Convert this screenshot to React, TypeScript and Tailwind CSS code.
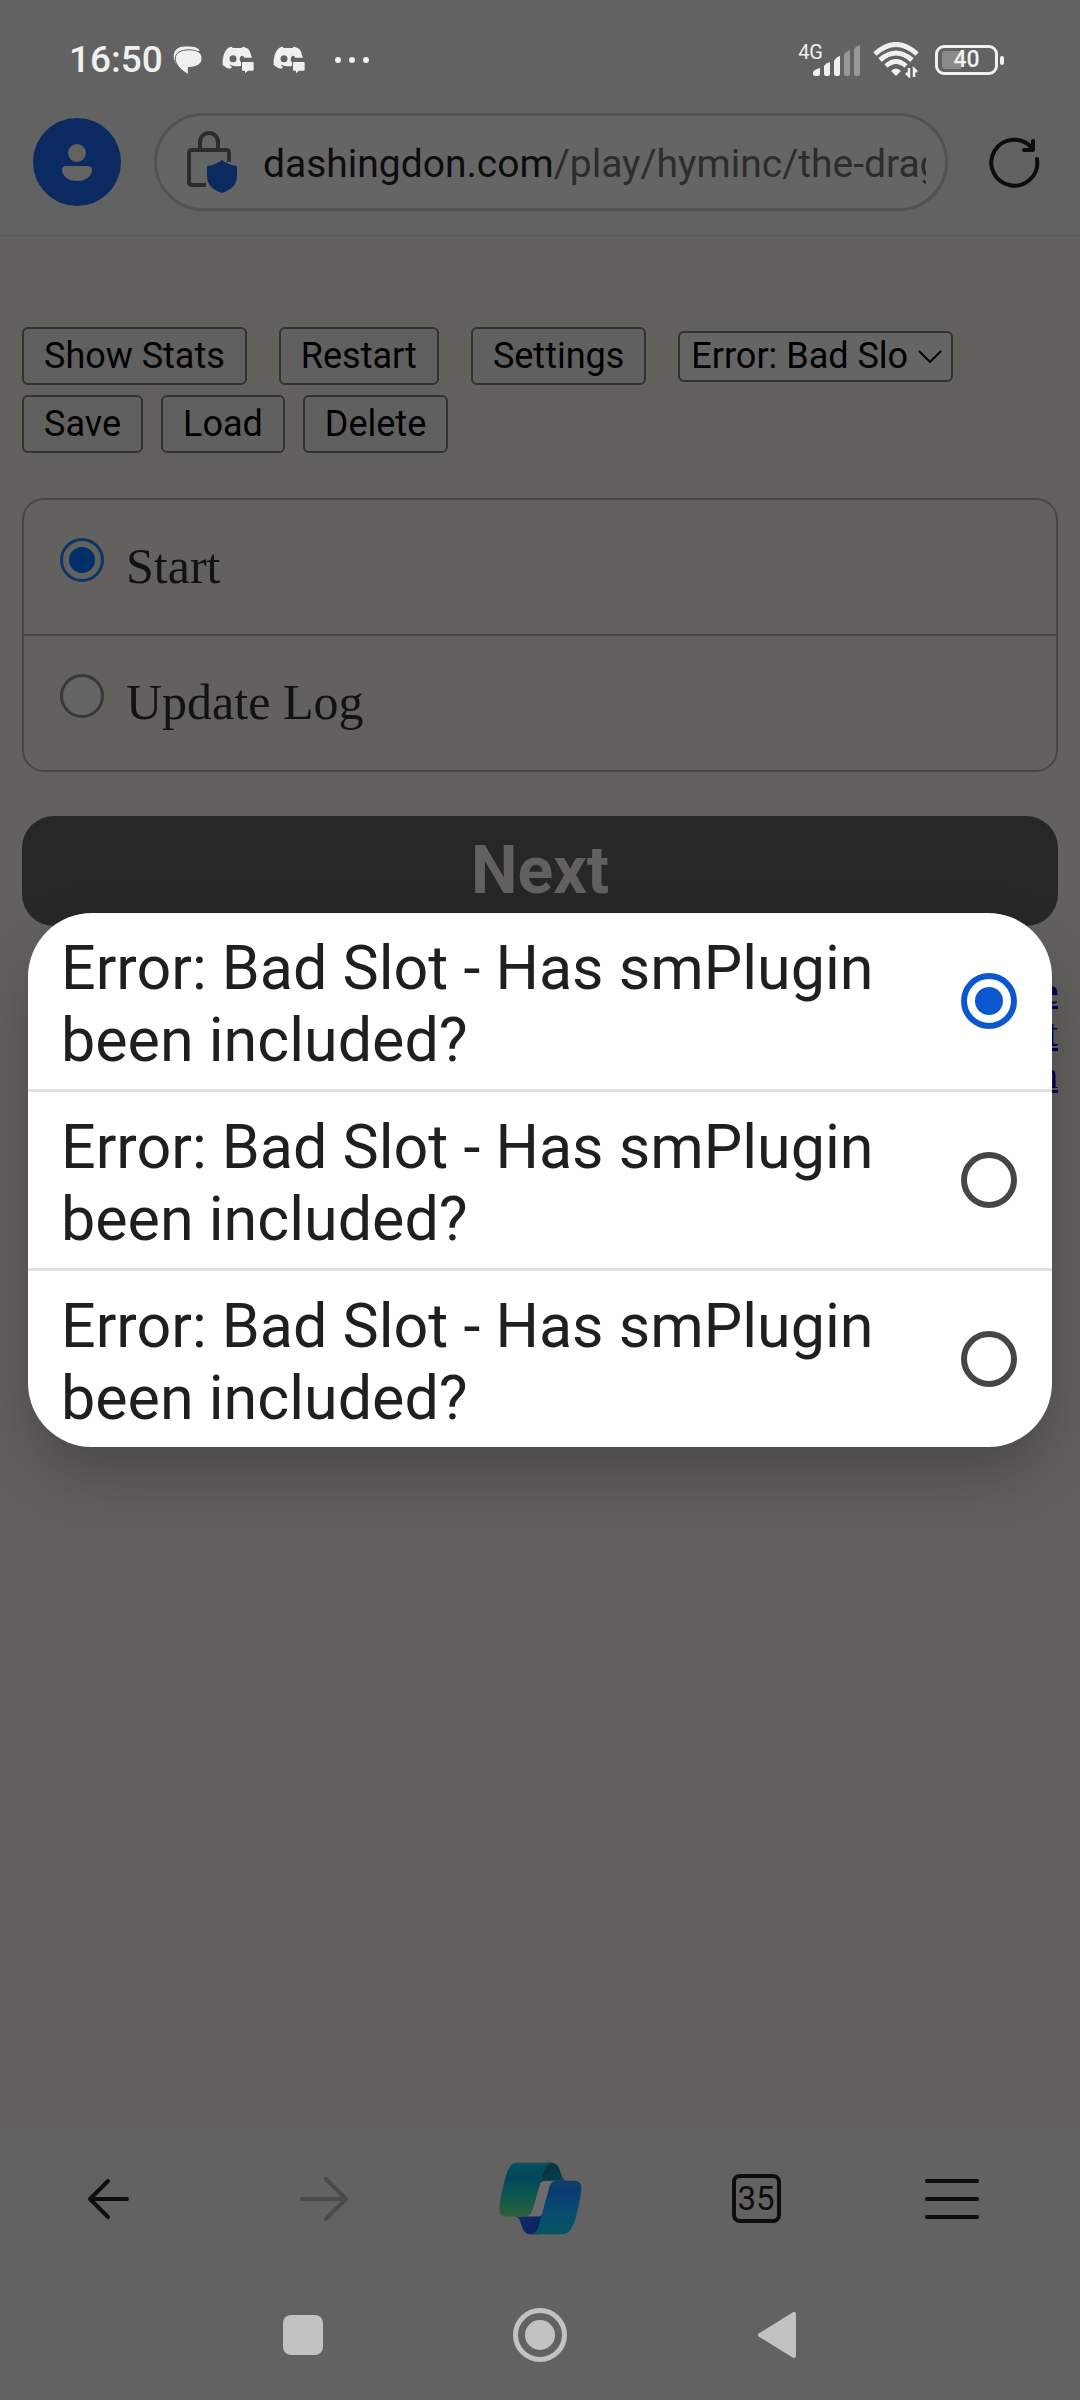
/**
 * Interactive story page on a phone, dimmed behind the native
 * drop-down dialog that lists the save slots.
 */

import { useState } from "react";

const SLOT_LABEL = "Error: Bad Slot - Has smPlugin been included?";
const SLOTS = ["slot-1", "slot-2", "slot-3"];
const CHOICES = ["Start", "Update Log"];

function ChatIcon() {
  return (
    <svg viewBox="40 32 90 86" className="h-[29px] w-[30px]" aria-hidden="true">
      <path
        d="M50 86C36 66 38 33 76 33C98 33 112 34 120 44Z"
        fill="#f0f0f0"
      />
      <path
        d="M127 69C127 88 108 96 86 96V117C70 108 47 92 47 69C47 51 64 43 88 43C112 43 127 51 127 69Z"
        fill="#f0f0f0"
        stroke="#626262"
        strokeWidth="3"
      />
    </svg>
  );
}

function DiscordIcon() {
  return (
    <svg viewBox="187 36 96 84" className="h-[28px] w-[32px]" aria-hidden="true">
      <path
        fillRule="evenodd"
        fill="#f0f0f0"
        d="M205 42L214 38Q217 38 219 42H246Q248 38 251 38L260 42Q268 44 272 56L277 71H254Q251 64 246 65Q240 67 240 75Q240 82 244 85V96Q232 98 220 95Q215 94 210 92Q211 97 217 98L213 104Q199 103 189 93Q187 58 205 42ZM220 64A10 10 0 1 0 220 85A10 10 0 1 0 220 64Z"
      />
      <path
        fill="#f0f0f0"
        d="M250 84H279Q282 84 282 88V107Q282 110 279 110H265L256 118V110H250Q247 110 247 107V88Q247 84 250 84Z"
      />
    </svg>
  );
}

function SignalIcon() {
  return (
    <svg viewBox="0 0 48 31" className="h-[31px] w-[48px]" aria-hidden="true">
      <g fill="#f0f0f0">
        <path d="M0 27Q2 24 7 23V29Q7 31 5 31H2Q0 31 0 29Z" />
        <path d="M11 21Q13 18 17 17V29Q17 31 15 31H13Q11 31 11 29Z" />
        <path d="M21 16Q23 12 27 11V29Q27 31 25 31H23Q21 31 21 29Z" />
      </g>
      <g fill="#979797">
        <path d="M31 10Q33 6 37 5V29Q37 31 35 31H33Q31 31 31 29Z" />
        <path d="M41 4Q43 1 47 0V29Q47 31 45 31H43Q41 31 41 29Z" />
      </g>
    </svg>
  );
}

function WifiIcon() {
  return (
    <svg viewBox="0 0 46 36" className="h-[36px] w-[46px]" aria-hidden="true">
      <g fill="none" stroke="#f0f0f0" strokeWidth="5">
        <path d="M2 12Q23 -7 44 12" />
        <path d="M7 18Q23 4 39 18" />
        <path d="M13 24Q23 15 33 24" />
      </g>
      <path d="M18 29Q23 24 28 29L23 34Z" fill="#f0f0f0" />
      <path
        d="M36 26V34L33 31M41 35V27L44 30"
        fill="none"
        stroke="#f0f0f0"
        strokeWidth="2.5"
      />
    </svg>
  );
}

function StatusBar() {
  return (
    <div className="flex h-9 items-center justify-between pr-[76px] pl-[69px] text-[#f0f0f0]">
      <div className="flex items-center">
        <span className="mr-2.5 text-[37px] leading-9 font-medium">16:50</span>
        <div className="flex items-center gap-[19px]">
          <ChatIcon />
          <DiscordIcon />
          <DiscordIcon />
        </div>
        <div className="ml-[30px] flex gap-2">
          <span className="size-1.5 rounded-full bg-[#f0f0f0]" />
          <span className="size-1.5 rounded-full bg-[#f0f0f0]" />
          <span className="size-1.5 rounded-full bg-[#f0f0f0]" />
        </div>
      </div>
      <div className="flex items-center">
        <div className="flex">
          <span className="-mr-2.5 text-[20px] leading-[14px]">4G</span>
          <SignalIcon />
        </div>
        <span className="ml-3">
          <WifiIcon />
        </span>
        <div className="ml-4 flex items-center gap-0.5">
          <div className="relative flex h-[30px] w-[63px] items-center justify-center rounded-[9px] border-[3px] border-[#f0f0f0]">
            <span className="absolute inset-y-[3px] left-1 w-5 rounded-[3px] bg-[#8b8b8b]" />
            <span className="relative text-[23px] leading-6 font-medium">40</span>
          </div>
          <span className="h-[9px] w-1 rounded-full bg-[#f0f0f0]" />
        </div>
      </div>
    </div>
  );
}

function AddressBar() {
  return (
    <div className="flex items-center pr-[39px] pl-[33px]">
      <button
        aria-label="Profile"
        className="flex size-[88px] shrink-0 items-center justify-center rounded-full bg-[#0c2a62]"
      >
        <svg viewBox="0 0 30 37" className="h-[37px] w-[30px]" fill="#636363" aria-hidden="true">
          <circle cx="15" cy="9" r="9" />
          <path d="M4 22H26Q30 22 30 26C30 32 24 37 15 37S0 32 0 26Q0 22 4 22Z" />
        </svg>
      </button>
      <button className="ml-[33px] flex h-[98px] min-w-0 flex-1 items-center overflow-hidden rounded-full border-[3px] border-[#525252] bg-[#656565] pr-[19px] pl-7">
        <svg viewBox="185 133 54 66" className="h-[66px] w-[54px] shrink-0" aria-hidden="true">
          <path
            d="M200 154V146A9 9 0 0 1 218 146V154M229 166V157Q229 154 226 154H192Q189 154 189 157V186Q189 189 192 189H206"
            fill="none"
            stroke="#2c2c2c"
            strokeWidth="4"
          />
          <path
            d="M222 164Q228 169 237 170V180C237 189 231 194 222 197C213 194 207 189 207 180V170Q216 169 222 164Z"
            fill="#0c2a62"
          />
        </svg>
        <span className="ml-6 min-w-0 flex-1 overflow-hidden pt-1 text-left text-[39px] leading-[52px] whitespace-nowrap text-[#2c2c2c]">
          <span className="text-[#0d0d0d]">dashingdon.com</span>
          /play/hyminc/the-drag
        </span>
      </button>
      <button aria-label="Reload" className="ml-[39px] shrink-0">
        <svg viewBox="987 136 54 54" className="size-[54px]" aria-hidden="true">
          <path
            d="M1037 160A23 23 0 1 1 1032 149M1033 142V151H1024"
            fill="none"
            stroke="#0d0d0d"
            strokeWidth="4"
            strokeLinecap="round"
            strokeLinejoin="round"
          />
        </svg>
      </button>
    </div>
  );
}

function PageButton({ children }: { children: string }) {
  return (
    <button className="rounded-md border-2 border-[#313131] bg-[#606060] px-5 text-[36px] leading-[54px] text-black">
      {children}
    </button>
  );
}

function CopilotIcon() {
  return (
    <svg viewBox="56 37 250 219" className="h-[73px] w-[83px]" aria-hidden="true">
      <defs>
        <linearGradient id="cp-left" x1="0" y1="0" x2="0" y2="1">
          <stop offset="0" stopColor="#05505f" />
          <stop offset="0.3" stopColor="#03475a" />
          <stop offset="0.65" stopColor="#0d584e" />
          <stop offset="1" stopColor="#31613c" />
        </linearGradient>
        <linearGradient id="cp-right" x1="0" y1="0" x2="0" y2="1">
          <stop offset="0" stopColor="#11406c" />
          <stop offset="0.2" stopColor="#0b3a74" />
          <stop offset="0.6" stopColor="#074c70" />
          <stop offset="1" stopColor="#065560" />
        </linearGradient>
        <linearGradient id="cp-top" x1="0" y1="0" x2="1" y2="1">
          <stop offset="0" stopColor="#02303c" />
          <stop offset="1" stopColor="#084559" />
        </linearGradient>
        <linearGradient id="cp-bottom" x1="0" y1="0" x2="1" y2="1">
          <stop offset="0" stopColor="#10306c" />
          <stop offset="1" stopColor="#0a1f5a" />
        </linearGradient>
      </defs>
      <path d="M142 201L178 96H225L192 190Q186 201 170 201Z" fill="#6c6c6c" />
      <path
        d="M104 201H170Q184 201 190 190L196 170L184 254H150Q132 254 126 234L120 216Q116 203 104 201Z"
        fill="url(#cp-bottom)"
      />
      <path
        d="M200 39H212Q232 39 239 60L246 80Q250 92 262 93H195Q180 94 174 110Z"
        fill="url(#cp-top)"
      />
      <path
        d="M106 39H218Q198 42 190 66L160 172Q153 201 134 201H77Q57 201 57 180C57 160 68 110 76 80Q86 42 106 39Z"
        fill="url(#cp-left)"
      />
      <path
        d="M226 93H284Q304 94 304 114C304 134 294 180 286 208Q274 252 248 254H150Q168 252 174 234L206 118Q212 94 226 93Z"
        fill="url(#cp-right)"
      />
    </svg>
  );
}

function Toolbar() {
  return (
    <nav className="grid h-[147px] grid-cols-5 items-center justify-items-center border-t-2 border-[#5f5f5f] pb-0.5">
      <button aria-label="Back">
        <svg viewBox="0 0 42 42" className="size-[42px]" fill="none" stroke="#0d0d0d" strokeWidth="4" strokeLinecap="round" strokeLinejoin="round" aria-hidden="true">
          <path d="M40 21H3M21 3L3 21L21 39" />
        </svg>
      </button>
      <button aria-label="Forward" disabled>
        <svg viewBox="0 0 50 46" className="h-[46px] w-[50px]" fill="none" stroke="#4a4a4a" strokeWidth="4" strokeLinecap="round" strokeLinejoin="round" aria-hidden="true">
          <path d="M3 23H47M27 3L47 23L27 43" />
        </svg>
      </button>
      <button aria-label="Copilot">
        <CopilotIcon />
      </button>
      <button
        aria-label="35 open tabs"
        className="flex size-[49px] items-center justify-center rounded-lg border-4 border-[#0d0d0d] text-[33px] leading-10 text-[#0d0d0d]"
      >
        35
      </button>
      <button aria-label="Menu" className="flex flex-col gap-3.5 pr-10">
        <span className="h-1 w-[54px] rounded-full bg-[#0d0d0d]" />
        <span className="h-1 w-[54px] rounded-full bg-[#0d0d0d]" />
        <span className="h-1 w-[54px] rounded-full bg-[#0d0d0d]" />
      </button>
    </nav>
  );
}

function SystemNav() {
  return (
    <div className="flex h-32 items-center justify-center gap-[183px] pb-0.5">
      <button aria-label="Recent apps" className="flex w-[54px] justify-center">
        <span className="size-10 rounded-lg bg-[#c2c2c2]" />
      </button>
      <button
        aria-label="Home"
        className="flex size-[54px] items-center justify-center rounded-full border-5 border-[#c2c2c2]"
      >
        <span className="size-[30px] rounded-full bg-[#c2c2c2]" />
      </button>
      <button aria-label="System back" className="flex w-[54px] justify-center">
        <svg viewBox="0 0 38 46" className="h-[46px] w-[38px]" fill="#c2c2c2" stroke="#c2c2c2" strokeWidth="4" strokeLinejoin="round" aria-hidden="true">
          <path d="M36 2V44L2 23Z" />
        </svg>
      </button>
    </div>
  );
}

export default function App() {
  const [choice, setChoice] = useState(CHOICES[0]);
  const [slot, setSlot] = useState(SLOTS[0]);

  return (
    <div className="relative flex min-h-screen flex-col bg-[#626262] font-[Roboto,sans-serif]">
      <header className="border-b-3 border-[#5a5a5a] pt-[42px] pb-[23px]">
        <StatusBar />
        <div className="mt-[35px]">
          <AddressBar />
        </div>
      </header>

      <main className="flex-1 bg-[#63615e] px-[22px] pt-[90px]">
        <div className="flex items-center gap-8">
          <PageButton>Show Stats</PageButton>
          <PageButton>Restart</PageButton>
          <PageButton>Settings</PageButton>
          <div className="relative">
            <select
              aria-label="Save slot"
              value={slot}
              onChange={(e) => setSlot(e.target.value)}
              className="block h-[51px] w-[275px] appearance-none rounded-md border-2 border-[#313131] bg-[#656565] pr-[43px] pl-[11px] text-[36px] leading-[46px] text-black"
            >
              {SLOTS.map((id) => (
                <option key={id} value={id}>
                  {SLOT_LABEL}
                </option>
              ))}
            </select>
            <svg
              viewBox="0 0 24 13"
              className="pointer-events-none absolute top-[19px] right-[11px] h-[13px] w-6"
              fill="none"
              stroke="#000000"
              strokeWidth="2"
              aria-hidden="true"
            >
              <path d="M1 1L12 12L23 1" />
            </svg>
          </div>
        </div>
        <div className="mt-2.5 flex gap-[18px]">
          <PageButton>Save</PageButton>
          <PageButton>Load</PageButton>
          <PageButton>Delete</PageButton>
        </div>

        <form onSubmit={(e) => e.preventDefault()}>
          <div className="mt-[45px] divide-y-2 divide-[#454545] rounded-[22px] border-2 border-[#454545] font-['Liberation_Serif',serif]">
            {CHOICES.map((name) => (
              <label
                key={name}
                className="flex items-start pt-9 pb-[38px] pl-9 text-[50px] leading-[60px] text-[#121211]"
              >
                <input
                  type="radio"
                  name="choice"
                  checked={choice === name}
                  onChange={() => setChoice(name)}
                  className="mt-0.5 mr-[22px] grid size-11 shrink-0 appearance-none place-content-center rounded-full border-3 border-[#383838] bg-[#646464] checked:border-[#0b3568] checked:bg-transparent checked:before:size-[26px] checked:before:rounded-full checked:before:bg-[#003069]"
                />
                {name}
              </label>
            ))}
          </div>

          <button
            type="submit"
            className="mt-11 block w-full rounded-[32px] bg-[#272725] text-[66px] leading-[110px] font-bold text-[#63615e]"
          >
            Next
          </button>
        </form>

        {/* Footer links, mostly covered by the dialog */}
        <div className="mt-11 flex flex-col items-end font-['Liberation_Serif',serif] text-[38px] leading-[42px] text-[#00005c] underline">
          <a href="#e" className="font-bold">e</a>
          <a href="#t">t</a>
          <a href="#n">n</a>
        </div>
      </main>

      <Toolbar />
      <SystemNav />

      <div
        role="dialog"
        aria-label="Save slot"
        className="absolute inset-x-7 top-[913px] divide-y-3 divide-[#e0e0e0] overflow-hidden rounded-[64px] bg-white shadow-[0_32px_64px_rgba(0,0,0,0.24)]"
      >
        {SLOTS.map((id) => (
          <label
            key={id}
            className="flex items-center justify-between pr-[35px] pl-[33px] text-[61px] leading-[72px] text-[#1f1f1f]"
          >
            <span className="max-w-[860px] pt-[19px] pb-[13px]">{SLOT_LABEL}</span>
            <input
              type="radio"
              name="slot"
              checked={slot === id}
              onChange={() => setSlot(id)}
              className="grid size-14 shrink-0 appearance-none place-content-center rounded-full border-6 border-[#444746] checked:border-[#0b57d0] checked:before:size-7 checked:before:rounded-full checked:before:bg-[#0b57d0]"
            />
          </label>
        ))}
      </div>
    </div>
  );
}
